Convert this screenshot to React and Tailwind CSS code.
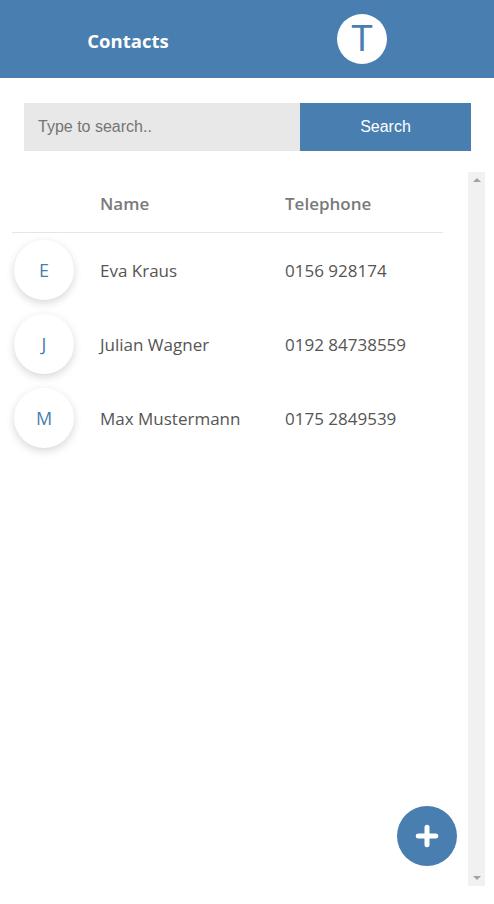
import { Plus } from "lucide-react";

const contacts = [
  { initial: "E", name: "Eva Kraus", phone: "0156 928174" },
  { initial: "J", name: "Julian Wagner", phone: "0192 84738559" },
  { initial: "M", name: "Max Mustermann", phone: "0175 2849539" },
];

const uiFont = { fontFamily: '"Segoe UI", "Open Sans", "Noto Sans", sans-serif' };

function App() {
  return (
    <div className="relative w-[494px] h-[904px] bg-white overflow-hidden" style={uiFont}>
      {/* header */}
      <header className="h-[78px] bg-[#487eb0] flex items-center">
        <div className="w-[256px] flex justify-center pt-[4px]">
          <h1 className="text-white text-[18.5px] font-bold">Contacts</h1>
        </div>
        <div className="w-[212px] flex justify-center">
          <div className="w-[50px] h-[50px] rounded-full bg-white flex items-center justify-center text-[#487eb0] text-[36px] leading-none font-normal" style={{ fontFamily: '"Liberation Sans", Arial, sans-serif' }}>
            T
          </div>
        </div>
      </header>

      {/* search */}
      <div className="mt-[25px] mx-[24px] flex h-[48px] w-[447px]" style={{ fontFamily: '"Liberation Sans", Arial, sans-serif' }}>
        <input
          type="text"
          placeholder="Type to search.."
          className="w-[276px] h-full bg-[#e8e8e8] px-[14px] text-[16px] text-[#333] placeholder:text-[#757575] outline-none"
        />
        <button className="flex-1 h-full bg-[#487eb0] text-white text-[16px]">Search</button>
      </div>

      {/* list + scrollbar */}
      <div className="mt-[21px] ml-[12px] flex h-[714px]">
        <div className="w-[431px]">
          <div className="grid grid-cols-[88px_185px_1fr] items-center h-[61px] border-b border-[#e6e6e6] text-[17px] font-semibold text-[#7a7a7a] pt-[3px]">
            <div />
            <div>Name</div>
            <div>Telephone</div>
          </div>
          {contacts.map((c) => (
            <div key={c.name} className="grid grid-cols-[88px_185px_1fr] items-center h-[74px] text-[17px] text-[#555]">
              <div className="pl-[2px]">
                <div className="w-[60px] h-[60px] rounded-full bg-white shadow-[0_3px_8px_rgba(0,0,0,0.16)] flex items-center justify-center text-[#487eb0] text-[18px]">
                  {c.initial}
                </div>
              </div>
              <div className="pt-[2px]">{c.name}</div>
              <div className="pt-[2px]">{c.phone}</div>
            </div>
          ))}
        </div>
        <div className="ml-[25px] w-[17px] h-full bg-[#f1f1f1] flex flex-col justify-between items-center py-[6px]">
          <div className="w-0 h-0 border-l-[4px] border-r-[4px] border-b-[4px] border-l-transparent border-r-transparent border-b-[#a3a3a3]" />
          <div className="w-0 h-0 border-l-[4px] border-r-[4px] border-t-[4px] border-l-transparent border-r-transparent border-t-[#a3a3a3]" />
        </div>
      </div>

      {/* add button */}
      <button className="absolute left-[397px] top-[806px] w-[60px] h-[60px] rounded-full bg-[#487eb0] flex items-center justify-center text-white">
        <Plus size={30} strokeWidth={4} />
      </button>
    </div>
  );
}

export default App;
